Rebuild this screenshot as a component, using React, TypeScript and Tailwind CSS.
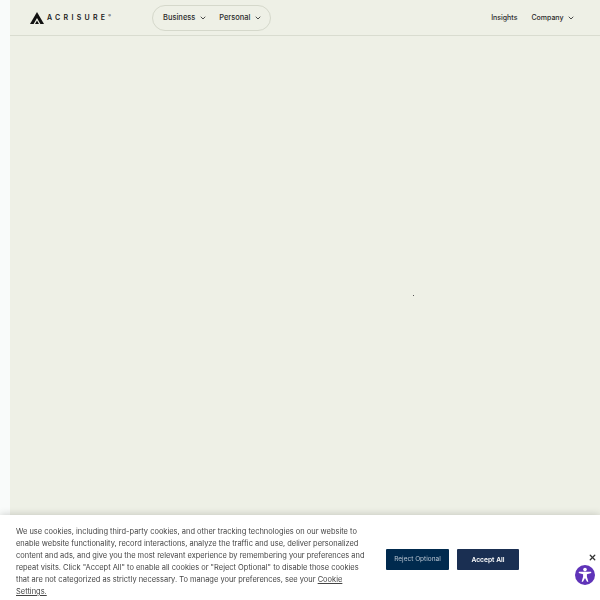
import { ChevronDown, X } from "lucide-react";

function Logo() {
  return (
    <div className="flex w-[82px] items-center gap-[3px]">
      <svg width="14" height="12" viewBox="0 0 14 12">
        <path d="M7 0L14 12H0Z" fill="#111" />
        <path d="M7 6L10.4 12H9L7 8.5L5 12H3.6Z" fill="#eef0e6" />
      </svg>
      <span className="flex items-start pt-px font-semibold text-[#1a1a1a]">
        <span className="text-[7px] tracking-[0.47em]">ACRISURE</span>
        <span className="text-[4px] leading-[6px]">®</span>
      </span>
    </div>
  );
}

function NavItem({ label, chevron = true, small = false }: { label: string; chevron?: boolean; small?: boolean }) {
  return (
    <span className={`flex items-center gap-[3.5px] pt-px font-medium text-[#2b2b2b] ${small ? "text-[7px]" : "text-[7.5px]"}`}>
      {label}
      {chevron && <ChevronDown size={8} strokeWidth={2.5} />}
    </span>
  );
}

function CookieBanner() {
  return (
    <div className="fixed bottom-0 left-0 right-0 flex h-[85px] bg-white pl-4 pt-[11px] shadow-[0_0_8px_rgba(0,0,0,0.2)]">
      <p className="w-[352px] text-[7.47px] leading-[12px] text-[#444]">
        We use cookies, including third-party cookies, and other tracking technologies on our website to enable website
        functionality, record interactions, analyze the traffic and use, deliver personalized content and ads, and give
        you the most relevant experience by remembering your preferences and repeat visits. Click "Accept All" to enable
        all cookies or "Reject Optional" to disable those cookies that are not categorized as strictly necessary. To
        manage your preferences, see your <span className="underline">Cookie Settings.</span>
      </p>
      <div className="ml-[18px] mt-[23px] flex h-[21px] gap-2">
        <button className="w-[63px] rounded-[1px] bg-[#002a4e] pt-px text-[6.5px] text-[#b9c6d3]">Reject Optional</button>
        <button className="w-[62px] rounded-[1px] bg-[#1a2f52] pt-px text-[6.7px] font-semibold text-white">Accept All</button>
      </div>
      <X size={9} strokeWidth={3.5} className="absolute right-[3px] top-[38px] text-[#333]" />
      <div className="absolute right-[5px] top-[50px] flex h-5 w-5 items-center justify-center rounded-full bg-[#5f33b8]">
        <svg width="18" height="18" viewBox="0 0 16 16" fill="white">
          <circle cx="8" cy="3.2" r="1.6" />
          <path d="M2.6 5.2L13.4 5.2L13.6 6.3L9.7 7.3V9.6L11 14H9.8L8 10.6L6.2 14H5L6.3 9.6V7.3L2.4 6.3Z" />
        </svg>
      </div>
    </div>
  );
}

export default function App() {
  return (
    <div className="flex h-screen bg-[#f9fbfa] pl-[10px] [font-family:Inter,sans-serif]">
      <div className="relative flex-1 bg-[#eef0e6]">
        <header className="flex h-[36px] items-center justify-between border-b border-[#d9dcd0] pl-[20px] pr-[25px]">
          <div className="flex items-center gap-[40px]">
            <Logo />
            <nav className="flex h-[26px] w-[119px] items-center justify-between rounded-full border border-[#d5d8cb] pl-[10px] pr-[8px]">
              <NavItem label="Business" />
              <NavItem label="Personal" />
            </nav>
          </div>
          <div className="flex items-center gap-[14px]">
            <NavItem label="Insights" chevron={false} small />
            <NavItem label="Company" small />
          </div>
        </header>
        <div className="flex justify-center pt-[259px] pl-[217px]">
          <span className="h-px w-px bg-[#555]" />
        </div>
      </div>
      <CookieBanner />
    </div>
  );
}
